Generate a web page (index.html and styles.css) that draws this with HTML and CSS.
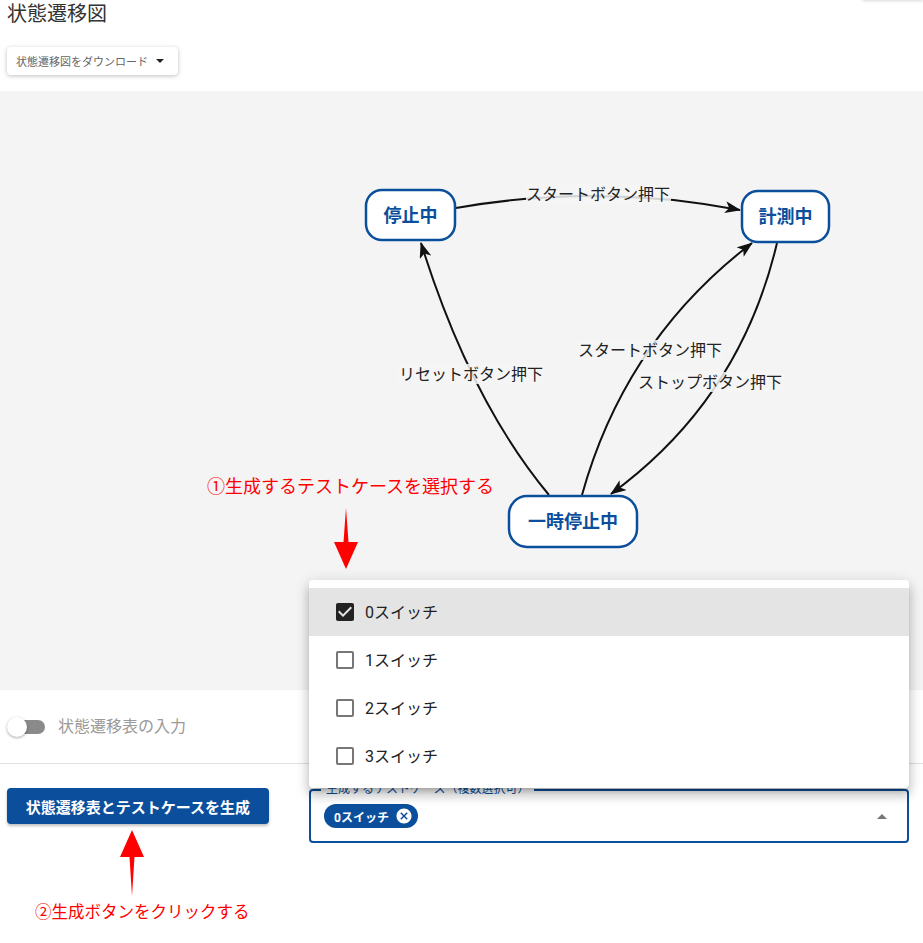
FILE: index.html
```html
<!DOCTYPE html>
<html>
<head>
    <meta charset="utf-8">
    <title>状態遷移図</title>
    <link rel="stylesheet" href="styles.css">
</head>
<body>
<div class="page">
    <div class="corner-card"></div>

    <div class="header">
        <h1>状態遷移図</h1>
        <button class="download">状態遷移図をダウンロード<span class="caret"></span></button>
    </div>

    <div class="canvas">
        <svg class="diagram" width="923" height="599" viewBox="0 91 923 599">
            <defs>
                <marker id="head" markerUnits="userSpaceOnUse" markerWidth="16" markerHeight="12" refX="15" refY="6" orient="auto">
                    <path d="M0,0 L16,6 L0,12 L4,6 z" fill="#111"/>
                </marker>
            </defs>

            <!-- edges -->
            <path class="edge" d="M456,208 Q598,183 740,210" marker-end="url(#head)"/>
            <path class="edge" d="M777,243 Q740,400 611,494" marker-end="url(#head)"/>
            <path class="edge" d="M582,495 Q625,340 752,243" marker-end="url(#head)"/>
            <path class="edge" d="M549,495 Q470,400 421,243" marker-end="url(#head)"/>

            <!-- edge labels -->
            <rect class="label-bg" x="526" y="184" width="145" height="20"/>
            <text class="edge-label" x="598" y="194">スタートボタン押下</text>
            <rect class="label-bg" x="637" y="372" width="146" height="20"/>
            <text class="edge-label" x="710" y="382">ストップボタン押下</text>
            <rect class="label-bg" x="577" y="340" width="146" height="20"/>
            <text class="edge-label" x="650" y="350">スタートボタン押下</text>
            <rect class="label-bg" x="398" y="364" width="146" height="20"/>
            <text class="edge-label" x="471" y="374">リセットボタン押下</text>

            <!-- nodes -->
            <rect class="node" x="366" y="190" width="89" height="50" rx="16"/>
            <text class="node-text" x="410.5" y="215">停止中</text>
            <rect class="node" x="742" y="191" width="87" height="51" rx="16"/>
            <text class="node-text" x="785.5" y="216">計測中</text>
            <rect class="node" x="509" y="496" width="128" height="51" rx="18"/>
            <text class="node-text" x="573" y="521">一時停止中</text>
        </svg>
    </div>

    <div class="switch-row">
        <span class="switch"><span class="track"></span><span class="thumb"></span></span>
        <span class="switch-label">状態遷移表の入力</span>
    </div>
    <hr class="divider">

    <div class="actions">
        <button class="generate">状態遷移表とテストケースを生成</button>
        <div class="select-field">
            <span class="field-label">生成するテストケース（複数選択可）</span>
            <span class="chip">0スイッチ
                <svg class="chip-x" viewBox="0 0 24 24" width="18" height="18"><path fill="#fff" d="M12 2C6.47 2 2 6.470 2 12s4.47 10 10 10 10-4.47 10-10S17.53 2 12 2zm5 13.59L15.59 17 12 13.41 8.41 17 7 15.59 10.590 12 7 8.41 8.41 7 12 10.59 15.59 7 17 8.41 13.41 12 17 15.59z"/></svg>
            </span>
            <span class="select-arrow"></span>
        </div>
    </div>

    <ul class="menu">
        <li class="selected">
            <svg class="box" viewBox="0 0 24 24" width="24" height="24"><path fill="#222" d="M19 3H5c-1.11 0-2 .9-2 2v14c0 1.1.89 2 2 2h14c1.11 0 2-.9 2-2V5c0-1.1-.89-2-2-2zm-9 14l-5-5 1.41-1.41L10 14.17l7.59-7.59L19 8l-9 9z"/></svg>
            <span>0スイッチ</span>
        </li>
        <li>
            <svg class="box" viewBox="0 0 24 24" width="24" height="24"><path fill="#777" d="M19 5v14H5V5h14m0-2H5c-1.1 0-2 .9-2 2v14c0 1.1.9 2 2 2h14c1.1 0 2-.9 2-2V5c0-1.1-.9-2-2-2z"/></svg>
            <span>1スイッチ</span>
        </li>
        <li>
            <svg class="box" viewBox="0 0 24 24" width="24" height="24"><path fill="#777" d="M19 5v14H5V5h14m0-2H5c-1.1 0-2 .9-2 2v14c0 1.1.9 2 2 2h14c1.1 0 2-.9 2-2V5c0-1.1-.9-2-2-2z"/></svg>
            <span>2スイッチ</span>
        </li>
        <li>
            <svg class="box" viewBox="0 0 24 24" width="24" height="24"><path fill="#777" d="M19 5v14H5V5h14m0-2H5c-1.1 0-2 .9-2 2v14c0 1.1.9 2 2 2h14c1.1 0 2-.9 2-2V5c0-1.1-.9-2-2-2z"/></svg>
            <span>3スイッチ</span>
        </li>
    </ul>

    <!-- annotations -->
    <div class="note note-select">①生成するテストケースを選択する</div>
    <svg class="arrow arrow-down" width="24" height="61" viewBox="0 0 24 61">
        <polygon points="12,0 14.5,34 24,34 12,61 0,34 9.5,34" fill="#ff0000"/>
    </svg>
    <svg class="arrow arrow-up" width="24" height="66" viewBox="0 0 24 66">
        <polygon points="12,0 24,27 14.5,27 12,66 9.5,27 0,27" fill="#ff0000"/>
    </svg>
    <div class="note note-click">②生成ボタンをクリックする</div>
</div>
</body>
</html>
```

FILE: styles.css
```css
body {
    margin: 0;
    background: white;
    font-family: Roboto, "Noto Sans CJK JP", sans-serif;
    color: #333;
}
.page {
    position: relative;
    width: 923px;
    height: 943px;
    overflow: hidden;
}
.corner-card {
    position: absolute;
    top: -20px;
    left: 862px;
    right: 0;
    height: 20px;
    background: white;
    box-shadow: 0 1px 3px rgba(0,0,0,0.15);
}

.header { padding: 0 7px; }
h1 {
    margin: 0;
    font-size: 20px;
    font-weight: 400;
    line-height: 28px;
    color: #333;
}
.download {
    display: flex;
    align-items: center;
    margin-top: 19px;
    height: 28px;
    width: 171px;
    padding: 0 0 0 9px;
    border: none;
    border-radius: 4px;
    background: white;
    box-shadow: 0 1px 4px rgba(0,0,0,0.25);
    font-family: inherit;
    font-size: 11px;
    color: #666;
}
.caret {
    margin-left: 8px;
    border-left: 4px solid transparent;
    border-right: 4px solid transparent;
    border-top: 4px solid #222;
}

.canvas {
    margin-top: 16px;
    height: 599px;
    background: #f4f4f4;
}
.diagram { display: block; }
.edge {
    fill: none;
    stroke: #111;
    stroke-width: 2;
}
.label-bg { fill: #f4f4f4; opacity: 0.85; }
.edge-label {
    font-size: 16px;
    fill: #222;
    text-anchor: middle;
    dominant-baseline: central;
}
.node {
    fill: white;
    stroke: #0b4f9c;
    stroke-width: 2.5;
}
.node-text {
    font-size: 18px;
    font-weight: 700;
    fill: #0b4f9c;
    text-anchor: middle;
    dominant-baseline: central;
}

.switch-row {
    display: flex;
    align-items: center;
    height: 73px;
    padding-left: 7px;
}
.switch {
    position: relative;
    width: 38px;
    height: 20px;
}
.track {
    position: absolute;
    left: 3px;
    top: 3px;
    width: 35px;
    height: 14px;
    border-radius: 7px;
    background: #8a8a8a;
}
.thumb {
    position: absolute;
    left: 0;
    top: 0;
    width: 20px;
    height: 20px;
    border-radius: 50%;
    background: white;
    box-shadow: 0 1px 3px rgba(0,0,0,0.35);
}
.switch-label {
    margin: 0 0 3px 13px;
    font-size: 16px;
    color: #9a9a9a;
}
.divider {
    margin: 0;
    border: none;
    border-top: 1px solid #e0e0e0;
}

.actions {
    display: flex;
    align-items: flex-start;
    gap: 40px;
    padding: 24px 0 0 7px;
}
.generate {
    width: 262px;
    height: 36px;
    border: none;
    border-radius: 4px;
    background: #0b4f9c;
    color: white;
    font-family: inherit;
    font-size: 15px;
    font-weight: 700;
    box-shadow: 0 2px 3px rgba(0,0,0,0.25);
}
.select-field {
    position: relative;
    display: flex;
    align-items: center;
    justify-content: space-between;
    box-sizing: border-box;
    margin-top: 1px;
    width: 600px;
    height: 54px;
    padding: 0 20px 0 13px;
    border: 2px solid #0b4f9c;
    border-radius: 4px;
}
.field-label {
    position: absolute;
    left: 10px;
    top: -9px;
    padding: 0 5px;
    background: white;
    font-size: 12px;
    line-height: 14px;
    color: #0b4f9c;
}
.chip {
    display: flex;
    align-items: center;
    gap: 6px;
    height: 24px;
    padding: 0 5px 0 10px;
    border-radius: 12px;
    background: #0b4f9c;
    color: white;
    font-size: 12px;
    font-weight: 700;
}
.chip-x { display: block; }
.select-arrow {
    border-left: 5px solid transparent;
    border-right: 5px solid transparent;
    border-bottom: 5px solid #777;
}

.menu {
    position: absolute;
    left: 309px;
    top: 580px;
    width: 600px;
    margin: 0;
    padding: 8px 0;
    list-style: none;
    background: white;
    border-radius: 4px;
    box-shadow: 0 5px 5px -3px rgba(0,0,0,0.2), 0 8px 10px 1px rgba(0,0,0,0.14), 0 3px 14px 2px rgba(0,0,0,0.12);
}
.menu li {
    display: flex;
    align-items: center;
    gap: 8px;
    height: 48px;
    padding-left: 24px;
    font-size: 16px;
    color: #222;
}
.menu li span { margin-bottom: 3px; }
.menu li.selected { background: #e4e4e4; }
.box { display: block; }

.note {
    position: absolute;
    color: #ff0000;
    line-height: 22px;
    white-space: nowrap;
}
.note-select { left: 207px; top: 476px; font-size: 18px; }
.note-click { left: 35px; top: 902px; font-size: 16.5px; }
.arrow { position: absolute; }
.arrow-down { left: 334px; top: 508px; }
.arrow-up { left: 120px; top: 830px; }
```
